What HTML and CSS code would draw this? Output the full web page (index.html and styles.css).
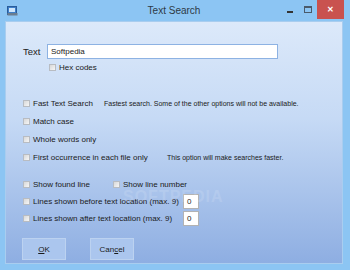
FILE: index.html
```html
<!DOCTYPE html>
<html>
<head>
    <title>Text Search</title>
    <link rel="stylesheet" href="styles.css">
</head>
<body>
    <div class="window">
        <div class="titlebar">
            <svg class="app-icon" width="11" height="11" viewBox="0 0 11 11">
                <rect x="0.5" y="1.5" width="9" height="8" fill="#3d7fc9" stroke="#2a5c9a"/>
                <rect x="2" y="3" width="6" height="4" fill="#cfe6fb"/>
                <rect x="0.5" y="8" width="10" height="2.5" fill="#6a7d90"/>
            </svg>
            <span class="title">Text Search</span>
            <div class="controls">
                <span class="ctl minimize"><span class="bar"></span></span>
                <span class="ctl maximize"><span class="box"></span></span>
                <span class="ctl close">&#x2715;</span>
            </div>
        </div>
        <div class="client">
            <div class="text-row">
                <span class="text-label">Text</span>
                <div class="text-input">Softpedia</div>
            </div>
            <div class="row hex-row"><span class="check"></span>Hex codes</div>

            <div class="options">
                <div class="row"><span class="check"></span><span class="opt-w1">Fast Text Search</span><span class="hint">Fastest search. Some of the other options will not be available.</span></div>
                <div class="row"><span class="check"></span>Match case</div>
                <div class="row"><span class="check"></span>Whole words only</div>
                <div class="row"><span class="check"></span><span class="opt-w2">First occurrence in each file only</span><span class="hint">This option will make searches faster.</span></div>
            </div>

            <div class="options display-opts">
                <div class="row"><span class="check"></span><span class="opt-w3">Show found line</span><span class="check"></span>Show line number</div>
                <div class="row"><span class="check"></span><span class="opt-w4">Lines shown before text location (max. 9)</span><span class="num-input">0</span></div>
                <div class="row"><span class="check"></span><span class="opt-w4">Lines shown after text location (max. 9)</span><span class="num-input">0</span></div>
            </div>

            <div class="buttons">
                <button class="btn"><u>O</u>K</button>
                <button class="btn">Can<u>c</u>el</button>
            </div>
            <div class="watermark">SOFTPEDIA</div>
        </div>
    </div>
</body>
</html>
```

FILE: styles.css
```css
body {
    margin: 0;
    font-family: 'Liberation Sans', Arial, sans-serif;
}
.window {
    width: 350px;
    height: 270px;
    box-sizing: border-box;
    background-color: #8cc5f3;
    padding: 0 7px 6px 5px;
    display: flex;
    flex-direction: column;
}
.titlebar {
    height: 21px;
    display: flex;
    align-items: center;
    position: relative;
}
.app-icon {
    margin-left: 2px;
    margin-top: -1px;
}
.title {
    position: absolute;
    left: 0;
    right: 0;
    top: 5px;
    text-align: center;
    font-size: 10px;
    color: #2e3a46;
}
.controls {
    margin-left: auto;
    display: flex;
    align-self: flex-start;
    margin-right: 0;
}
.ctl {
    display: flex;
    align-items: center;
    justify-content: center;
    height: 19px;
}
.minimize {
    width: 18px;
}
.minimize .bar {
    width: 6px;
    height: 2px;
    background-color: #333;
    margin-top: 4px;
}
.maximize {
    width: 18px;
}
.maximize .box {
    width: 6px;
    height: 4px;
    border: 1px solid #4a5a6a;
    border-top-width: 2px;
}
.close {
    width: 27px;
    background-color: #c9524f;
    color: #fff;
    font-size: 8px;
    font-weight: bold;
    margin-right: -1px;
}
.client {
    flex: 1;
    position: relative;
    background: linear-gradient(to bottom, #dce9fa, #c6daf5 40%, #8eaee2);
    border: 1px solid #a9cdef;
    padding: 0 0 0 17px;
    font-size: 8px;
    color: #1a1a1a;
}
.text-row {
    display: flex;
    align-items: center;
    margin-top: 22px;
}
.text-label {
    font-size: 9.5px;
    width: 24px;
    color: #222;
}
.text-input {
    width: 226px;
    height: 13px;
    line-height: 13px;
    border: 1px solid #8db2e3;
    background-color: #fff;
    padding-left: 3px;
    font-size: 8px;
}
.row {
    display: flex;
    align-items: center;
    height: 18px;
}
.hex-row {
    margin-left: 26px;
    height: 17px;
}
.check {
    width: 5px;
    height: 5px;
    border: 1px solid #b8bcc2;
    background: linear-gradient(135deg, #d8d8d8, #f6f6f6);
    margin-right: 3px;
    flex-shrink: 0;
}
.options {
    margin-top: 18px;
}
.display-opts {
    margin-top: 10px;
}
.display-opts .row {
    height: 17px;
}
.opt-w1 {
    width: 71px;
}
.opt-w2 {
    width: 134px;
}
.opt-w3 {
    width: 80px;
}
.opt-w4 {
    width: 150px;
}
.hint {
    font-size: 7px;
}
.num-input {
    width: 11px;
    height: 13px;
    line-height: 13px;
    border: 1px solid #b3b3b3;
    background-color: #fff;
    padding-left: 3px;
    font-size: 8px;
}
.buttons {
    display: flex;
    gap: 24px;
    margin-top: 11px;
    margin-left: -1px;
}
.btn {
    width: 44px;
    height: 22px;
    border: 1px solid #bcd2f0;
    background-color: #abc6ee;
    font-family: 'Liberation Sans', Arial, sans-serif;
    font-size: 8px;
    color: #1a1a1a;
    padding: 0;
}
.watermark {
    position: absolute;
    left: 117px;
    top: 166px;
    font-size: 16px;
    font-weight: bold;
    color: #ffffff;
    opacity: 0.12;
    letter-spacing: 1px;
    pointer-events: none;
}
```
